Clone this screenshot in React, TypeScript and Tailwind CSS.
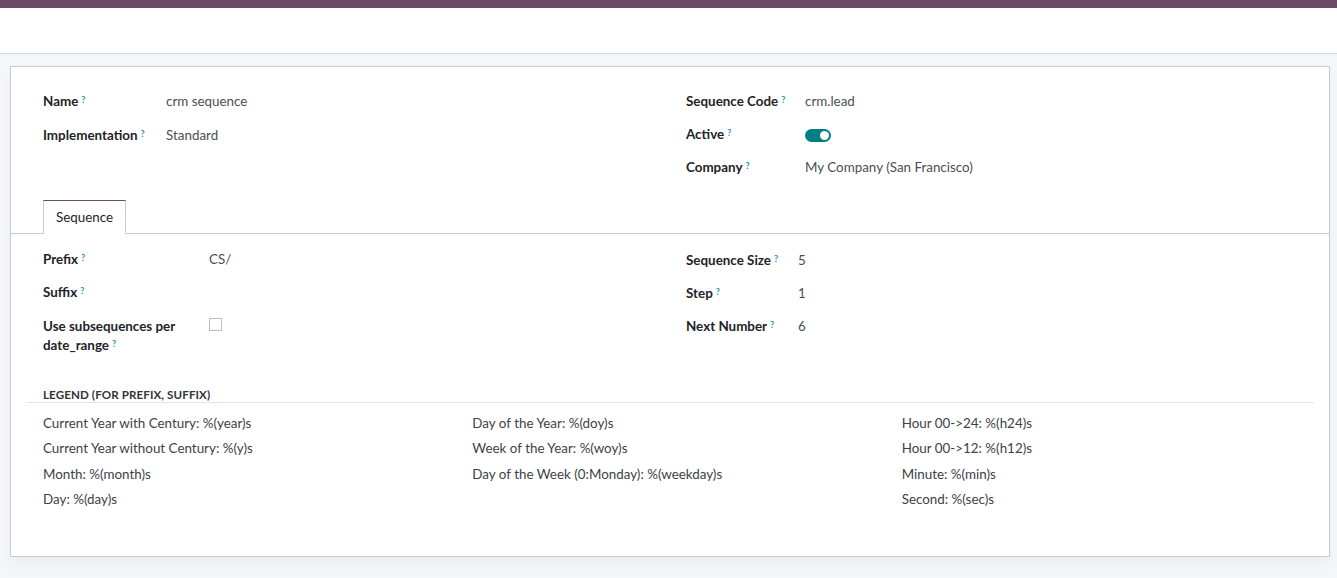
import React from "react";

const Q = () => (
  <sup className="ml-[3px] text-[9px] font-bold text-[#1f8fb0] relative top-[-3px]">?</sup>
);

const Label = ({ children }: { children: React.ReactNode }) => (
  <span className="font-bold text-[#1f2329]">
    {children}
    <Q />
  </span>
);

const Row = ({
  label,
  labelW,
  children,
  h = "h-[33px]",
}: {
  label: React.ReactNode;
  labelW: string;
  children?: React.ReactNode;
  h?: string;
}) => (
  <div className={`flex items-center ${h}`}>
    <div className={`${labelW} shrink-0`}>
      <Label>{label}</Label>
    </div>
    <div className="text-[#4a4f55]">{children}</div>
  </div>
);

export default function App() {
  const legend = [
    ["Current Year with Century: %(year)s", "Current Year without Century: %(y)s", "Month: %(month)s", "Day: %(day)s"],
    ["Day of the Year: %(doy)s", "Week of the Year: %(woy)s", "Day of the Week (0:Monday): %(weekday)s"],
    ["Hour 00->24: %(h24)s", "Hour 00->12: %(h12)s", "Minute: %(min)s", "Second: %(sec)s"],
  ];
  return (
    <div
      className="min-h-[578px] bg-[#f5f6fa] text-[13.4px]"
      style={{ fontFamily: "Lato, 'Noto Sans', sans-serif" }}
    >
      <div className="h-[8px] bg-[#6d4a65]" />
      <div className="h-[46px] bg-white border-b border-[#d6d7dc]" />
      <div className="pt-[12px] pl-[10px] pr-[7px] pb-[20px]">
        <div className="bg-white border border-[#c9cad1] shadow-[0_6px_14px_rgba(0,0,0,0.04)] h-[491px]">
          {/* top group */}
          <div className="flex pl-[32px] pt-[17px]">
            <div className="w-[643px]">
              <Row label="Name" labelW="w-[123px]" h="h-[34px]">crm sequence</Row>
              <Row label="Implementation" labelW="w-[123px]" h="h-[34px]">Standard</Row>
            </div>
            <div className="flex-1 pt-[1px]">
              <Row label="Sequence Code" labelW="w-[119px]">crm.lead</Row>
              <Row label="Active" labelW="w-[119px]">
                <div className="w-[26px] h-[13px] rounded-full bg-[#017e84] flex items-center justify-end pr-[2px] mt-[1px]">
                  <div className="w-[9px] h-[9px] rounded-full bg-white" />
                </div>
              </Row>
              <Row label="Company" labelW="w-[119px]">My Company (San Francisco)</Row>
            </div>
          </div>
          {/* tabs */}
          <div className="mt-[16px] border-b border-[#c9cad1] flex pl-[32px]">
            <div className="h-[34px] w-[83px] -mb-px bg-white border border-[#c9cad1] border-t-[#6d4a65] border-b-white flex items-center justify-center text-[#1f2329]">
              Sequence
            </div>
          </div>
          {/* sequence group */}
          <div className="flex pl-[32px] pt-[9px]">
            <div className="w-[643px]">
              <Row label="Prefix" labelW="w-[166px]">CS/</Row>
              <Row label="Suffix" labelW="w-[166px]" />
              <div className="flex items-start pt-[8px]">
                <div className="w-[166px] shrink-0 leading-[19px]">
                  <span className="font-bold text-[#1f2329]">
                    Use subsequences per
                    <br />
                    date_range
                    <Q />
                  </span>
                </div>
                <div className="w-[13px] h-[13px] border border-[#bdbdbd] mt-[1px] bg-white" />
              </div>
            </div>
            <div className="flex-1 pt-[1px]">
              <Row label="Sequence Size" labelW="w-[112px]">5</Row>
              <Row label="Step" labelW="w-[112px]">1</Row>
              <Row label="Next Number" labelW="w-[112px]">6</Row>
            </div>
          </div>
          {/* legend */}
          <div className="mx-[15px] mt-[32px]">
            <div className="border-b border-[#e2e3e6] pl-[17px] leading-[15px] text-[11.6px] font-bold text-[#30353b] tracking-[0.1px]">
              LEGEND (FOR PREFIX, SUFFIX)
            </div>
            <div className="grid grid-cols-3 pt-[7px] text-[#3d4248]">
              {legend.map((col, i) => (
                <div key={i} className="pl-[17px]">
                  {col.map((t) => (
                    <div key={t} className="h-[25.5px] flex items-center">
                      {t}
                    </div>
                  ))}
                </div>
              ))}
            </div>
          </div>
        </div>
      </div>
    </div>
  );
}
